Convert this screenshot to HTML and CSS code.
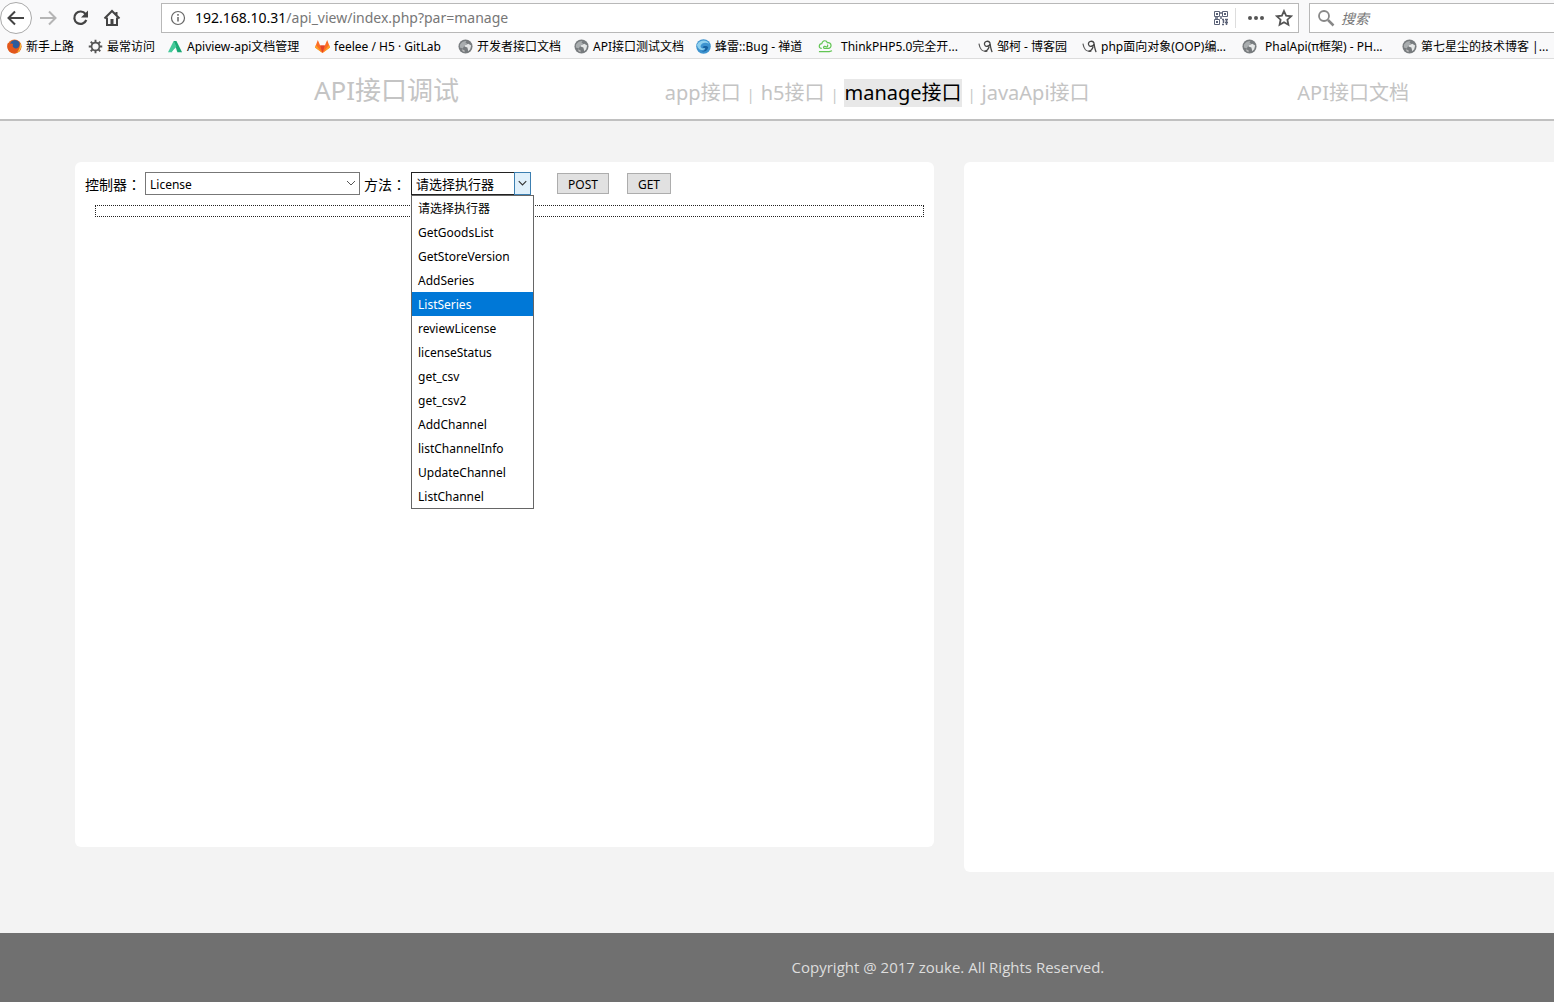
FILE: index.html
```html
<!DOCTYPE html>
<html lang="zh-CN">
<head>
<meta charset="utf-8">
<title>API接口调试</title>
<link rel="stylesheet" href="styles.css">
</head>
<body>
<svg class="defs" aria-hidden="true">
  <symbol id="globe" viewBox="0 0 16 16">
    <circle cx="8" cy="8" r="7.500" fill="#777b7e"/>
    <path d="M2 6c2-3 4-4 7-4l-1 2 2 1-3 2-2 3-3-1z" fill="#a9adaf"/>
    <path d="M7 7l4-2 3 2-1 4-2 2-1-4-3-1z" fill="#e4e6e6"/>
    <path d="M4 11l3 1v2l-2-1z" fill="#bbb"/>
  </symbol>
  <symbol id="cnblogs" viewBox="0 0 16 16">
    <path d="M1 5c1 6 3 9 9 8" fill="none" stroke="#555" stroke-width="1.2"/>
    <path d="M13 5c-1-4-7-3-6 1 1 3 5 2 6-1 0 3 1 6 2 9M12 8c-1 3-3 5-5 5" fill="none" stroke="#444" stroke-width="1.4"/>
  </symbol>
</svg>
<header class="browser">
  <div class="toolbar">
    <div class="tools">
      <button class="tool back" aria-label="后退"><svg width="32" height="32" viewBox="0 0 32 32"><circle cx="16" cy="15" r="15.5" fill="#fff" stroke="#aaa"/><path d="M24 15H9M15 8.500l-6.500 6.500 6.500 6.500" fill="none" stroke="#444" stroke-width="2"/></svg></button>
      <button class="tool" aria-label="前进"><svg width="32" height="32" viewBox="0 0 32 32"><path d="M8 15h15M17 8.500l6.500 6.500-6.500 6.500" fill="none" stroke="#b5b5b5" stroke-width="2"/></svg></button>
      <button class="tool" aria-label="刷新"><svg width="32" height="32" viewBox="0 0 32 32"><path d="M21.500 11a6.200 6.200 0 1 0 .8 6" fill="none" stroke="#444" stroke-width="2.200"/><path d="M24 7.500v7h-7z" fill="#444"/></svg></button>
      <button class="tool" aria-label="主页"><svg width="32" height="32" viewBox="0 0 32 32"><path d="M8.500 15.500L16 8l7.500 7.500M20.500 9v3" fill="none" stroke="#444" stroke-width="2"/><path d="M11 14.500V22h10v-7.500" fill="none" stroke="#444" stroke-width="2"/><path d="M14.500 16h3v6h-3z" fill="#444"/></svg></button>
    </div>
    <div class="address">
      <svg width="16" height="16" viewBox="0 0 16 16"><circle cx="8" cy="8" r="6.500" fill="none" stroke="#666" stroke-width="1.200"/><path d="M8 7v4.500M8 4v1.700" stroke="#666" stroke-width="1.500"/></svg>
      <div class="url"><b>192.168.10.31</b>/api_view/index.php?par=manage</div>
      <svg class="qr" width="16" height="16" viewBox="0 0 16 16" fill="none" stroke="#5b6277"><path d="M1.500 1.500h5v5h-5zM9.500 1.500h5v5h-5zM1.500 9.500h5v5h-5z"/><path d="M3 4h2M11 4h2M3 12h2" stroke-width="2"/><path d="M9 9.500h2M12 9.500h3M10.500 10v3M12 12.500h3M9 14.500h2M13.500 10v5M8 2v2M8 6v3M2 8h3" stroke-width="1.500"/></svg>
      <div class="actions">
        <svg width="18" height="16" viewBox="0 0 18 16" fill="#555"><circle cx="3" cy="8" r="2"/><circle cx="9" cy="8" r="2"/><circle cx="15" cy="8" r="2"/></svg>
        <svg width="18" height="18" viewBox="0 0 18 18"><path d="M9 2l2.100 4.700 5 .6-3.700 3.400 1 5L9 13.200l-4.400 2.500 1-5L1.900 7.300l5-.6z" fill="none" stroke="#555" stroke-width="1.800"/></svg>
      </div>
    </div>
    <label class="search">
      <svg width="18" height="18" viewBox="0 0 18 18" fill="none" stroke="#888"><circle cx="7" cy="7" r="5" stroke-width="1.800"/><path d="M11 11l5.500 5.500" stroke-width="2.500"/></svg>
      <input type="text" aria-label="搜索" placeholder="搜索">
    </label>
  </div>
  <nav class="bookmarks">
    <a href="#"><svg viewBox="0 0 16 16"><circle cx="8" cy="8" r="7.500" fill="#e66a1f"/><circle cx="8.500" cy="6.500" r="5.500" fill="#2b5c9c"/><path d="M1 4c1 0 2 1 3 1 2-1 3 1 2 2 0 3 4 4 6 2 2-2 1-5 2-5 3 5 0 11-6 11.500C1 15-1 9 1 4z" fill="#e2571c"/><path d="M14 4c2 4 1 9-4 11 3-3 4-6 4-11z" fill="#f9c23c"/></svg>新手上路</a>
    <a href="#"><svg viewBox="0 0 16 16" fill="none" stroke="#555"><circle cx="8" cy="8" r="4.200" stroke-width="1.800"/><path d="M8 .8v3M8 12.200v3M.8 8h3M12.200 8h3M2.900 2.900L5 5M11 11l2.100 2.100M2.900 13.100L5 11M11 5l2.100-2.100" stroke-width="2"/></svg>最常访问</a>
    <a href="#"><svg viewBox="0 0 16 16"><path d="M6 2h3l6 12h-5z" fill="#19a974"/><path d="M6 2l3 6-4.500 6H0z" fill="#44c99a"/><path d="M4 14l3-4 2 4z" fill="#fff"/></svg>Apiview-api文档管理</a>
    <a href="#"><svg viewBox="0 0 16 16"><path d="M8 15L0 9l3-8 2.500 6h5L13 1l3 8z" fill="#fc6d26"/><path d="M8 15L5.500 7h5z" fill="#e24329"/><path d="M0 9l1-2.500L8 15zM16 9l-1-2.500L8 15z" fill="#fca326"/></svg>feelee / H5 · GitLab</a>
    <a href="#"><svg><use href="#globe"/></svg>开发者接口文档</a>
    <a href="#"><svg><use href="#globe"/></svg>API接口测试文档</a>
    <a href="#"><svg viewBox="0 0 16 16"><circle cx="8" cy="8" r="7.800" fill="#3d93cf"/><path d="M1 6c3-5 10-6 13-1-4-2-8-1-9 2s3 4 5 2c0 4-8 4-9-3z" fill="#8fd0ee"/><path d="M7 9c1-2 5-2 6 0-1 4-4 5-7 4 3 0 4-2 4-3z" fill="#1761a0"/></svg>蜂雷::Bug - 禅道</a>
    <a class="wide" href="#"><svg viewBox="0 0 16 16" fill="none" stroke="#62c554" stroke-width="1.300"><path d="M4 10c-4 0-3-5 0-5 1-4 5-4 6-1 5-1 5 6 1 6H7c-2 0-1-3 1-2s3 0 2-2M1 13.500h11l3-1"/></svg>ThinkPHP5.0完全开...</a>
    <a href="#"><svg><use href="#cnblogs"/></svg>邹柯 - 博客园</a>
    <a href="#"><svg><use href="#cnblogs"/></svg>php面向对象(OOP)编...</a>
    <a class="wide" href="#"><svg><use href="#globe"/></svg>PhalApi(π框架) - PH...</a>
    <a href="#"><svg><use href="#globe"/></svg>第七星尘的技术博客 |...</a>
  </nav>
</header>
<header class="site">
  <a class="title" href="#">API接口调试</a>
  <nav class="sections">
    <a href="#">app接口</a><i>|</i><a href="#">h5接口</a><i>|</i><a class="current" href="#">manage接口</a><i>|</i><a href="#">javaApi接口</a>
  </nav>
  <a class="docs" href="#">API接口文档</a>
</header>
<main>
  <section class="card request">
    <form>
      <label for="controller">控制器：</label>
      <div class="picker controller">
        <select id="controller"><option>License</option></select>
        <svg class="arrow" viewBox="0 0 16 21"><path d="M4 8l4 4 4-4" fill="none" stroke="#555"/></svg>
      </div>
      <label for="method">方法：</label>
      <div class="picker method">
        <select id="method"><option>请选择执行器</option></select>
        <svg class="arrow" viewBox="0 0 16 21"><path d="M4 8l4 4 4-4" fill="none" stroke="#333" stroke-width="1.200"/></svg>
        <ul class="menu">
          <li>请选择执行器</li>
          <li>GetGoodsList</li>
          <li>GetStoreVersion</li>
          <li>AddSeries</li>
          <li class="active">ListSeries</li>
          <li>reviewLicense</li>
          <li>licenseStatus</li>
          <li>get_csv</li>
          <li>get_csv2</li>
          <li>AddChannel</li>
          <li>listChannelInfo</li>
          <li>UpdateChannel</li>
          <li>ListChannel</li>
        </ul>
      </div>
      <div class="submit">
        <button type="button">POST</button>
        <button type="button">GET</button>
      </div>
    </form>
    <div class="params"></div>
  </section>
  <section class="card response"></section>
</main>
<footer>Copyright @ 2017 zouke. All Rights Reserved.</footer>
</body>
</html>
```
FILE: styles.css
```css
* { box-sizing: border-box; }
body {
  margin: 0;
  min-height: 100vh;
  display: flex;
  flex-direction: column;
  overflow-x: hidden;
  background: #f3f3f3;
  color: #000;
  font-family: "Noto Sans", "Noto Sans CJK SC", sans-serif;
}
a { color: inherit; text-decoration: none; }
svg { display: block; flex: none; }
.defs { position: absolute; width: 0; height: 0; }

.browser { background: #f9f9fa; border-bottom: 1px solid #ddd; }
.toolbar { display: flex; padding-top: 3px; }
.tools { display: flex; width: 161px; flex: none; }
.tool { width: 32px; height: 32px; padding: 0; border: 0; background: none; }
.tool svg { overflow: visible; }
.address {
  flex: 1;
  display: flex;
  align-items: center;
  height: 30px;
  padding: 0 5px 0 8px;
  border: 1px solid #b8b8b8;
  background: #fff;
}
.url { flex: 1; padding-left: 9px; font: 14px/28px "Noto Sans", sans-serif; color: #777; }
.url b { font-weight: 400; color: #000; }
.actions {
  display: flex;
  align-items: center;
  gap: 10px;
  height: 20px;
  margin-left: 6px;
  padding-left: 11px;
  border-left: 1px solid #ddd;
}
.search {
  display: flex;
  align-items: center;
  gap: 6px;
  width: 245px;
  height: 30px;
  margin-left: 10px;
  padding-left: 7px;
  border: 1px solid #b8b8b8;
  border-right: 0;
  background: #fff;
}
.search input {
  flex: 1;
  min-width: 0;
  padding: 0;
  border: 0;
  font: italic 14px "Noto Sans CJK SC", sans-serif;
}
.search input::placeholder { color: #777; }

.bookmarks {
  display: grid;
  grid-template-columns: 81px 80px 147px 143px 116px 122px 122px 160px 104px 160px 160px 1fr;
  height: 23px;
  padding: 0 0 1px 7px;
  font-size: 12px;
  white-space: nowrap;
}
.bookmarks a { display: flex; align-items: center; gap: 4px; min-width: 0; }
.bookmarks .wide { gap: 8px; }
.bookmarks svg { width: 15px; height: 15px; }

.site {
  display: grid;
  grid-template-columns: 28.3% 51% 1fr;
  align-items: baseline;
  height: 62px;
  padding: 12px 0 0 20.2%;
  border-bottom: 2px solid #c0c0c0;
  background: #fff;
  color: #c4c4c4;
  font-size: 20px;
  line-height: 28px;
  white-space: nowrap;
}
.title { font-size: 26px; line-height: 38px; }
.sections { display: flex; align-items: baseline; }
.sections i { width: 20px; font-size: 14px; font-style: normal; text-align: center; }
.current { background: #e8e8e8; color: #000; }

main {
  flex: 1;
  display: flex;
  align-items: flex-start;
  gap: 30px;
  padding: 41px 0 61px 75px;
}
.card { background: #fff; border-radius: 6px; }
.request { width: 58.1%; min-height: 685px; padding: 10px; }
.response { flex: 1; min-height: 710px; border-radius: 6px 0 0 6px; }
form { display: flex; align-items: center; height: 23px; font-size: 14px; white-space: nowrap; }
form label { font-family: "Noto Sans CJK TC", sans-serif; font-feature-settings: "locl" 0; line-height: 20px; }
.picker { position: relative; height: 23px; margin: 0 4px; }
.controller { width: 215px; }
.method { width: 120px; margin-left: 5px; }
select {
  appearance: none;
  width: 100%;
  height: 23px;
  padding: 1px 20px 0 4px;
  border: 1px solid #777;
  border-radius: 0;
  background: #fff;
  color: #000;
  font: 12px "Noto Sans", "Noto Sans CJK SC", sans-serif;
}
.method select { padding-top: 0; border-color: #222; font-size: 13px; }
.arrow { position: absolute; top: 1px; right: 1px; width: 16px; height: 21px; pointer-events: none; }
.method .arrow { top: 0; right: 0; width: 17px; height: 23px; border: 1px solid #3c7fb1; background: #e0f0fb; }
.menu {
  position: absolute;
  z-index: 1;
  top: 100%;
  left: 0;
  width: 123px;
  margin: 0;
  padding: 0;
  border: 1px solid #666;
  background: #fff;
  font-size: 12px;
  line-height: 22px;
  list-style: none;
}
.menu li { height: 24px; padding: 2px 0 0 6px; }
.menu .active { background: #0078d7; color: #fff; }
.submit { display: flex; gap: 18px; padding-left: 22px; }
.submit button {
  height: 21px;
  padding: 1px 10px 0;
  border: 1px solid #adadad;
  background: #e1e1e1;
  color: #000;
  font: 12px "Noto Sans", sans-serif;
}
.params { height: 12px; margin: 10px 0 0 10px; border: 1px dotted #222; }

footer {
  padding: 24px 0 25px 22%;
  background: #707070;
  color: #ddd;
  font: 15px/20px "Open Sans", sans-serif;
  text-align: center;
}
```
